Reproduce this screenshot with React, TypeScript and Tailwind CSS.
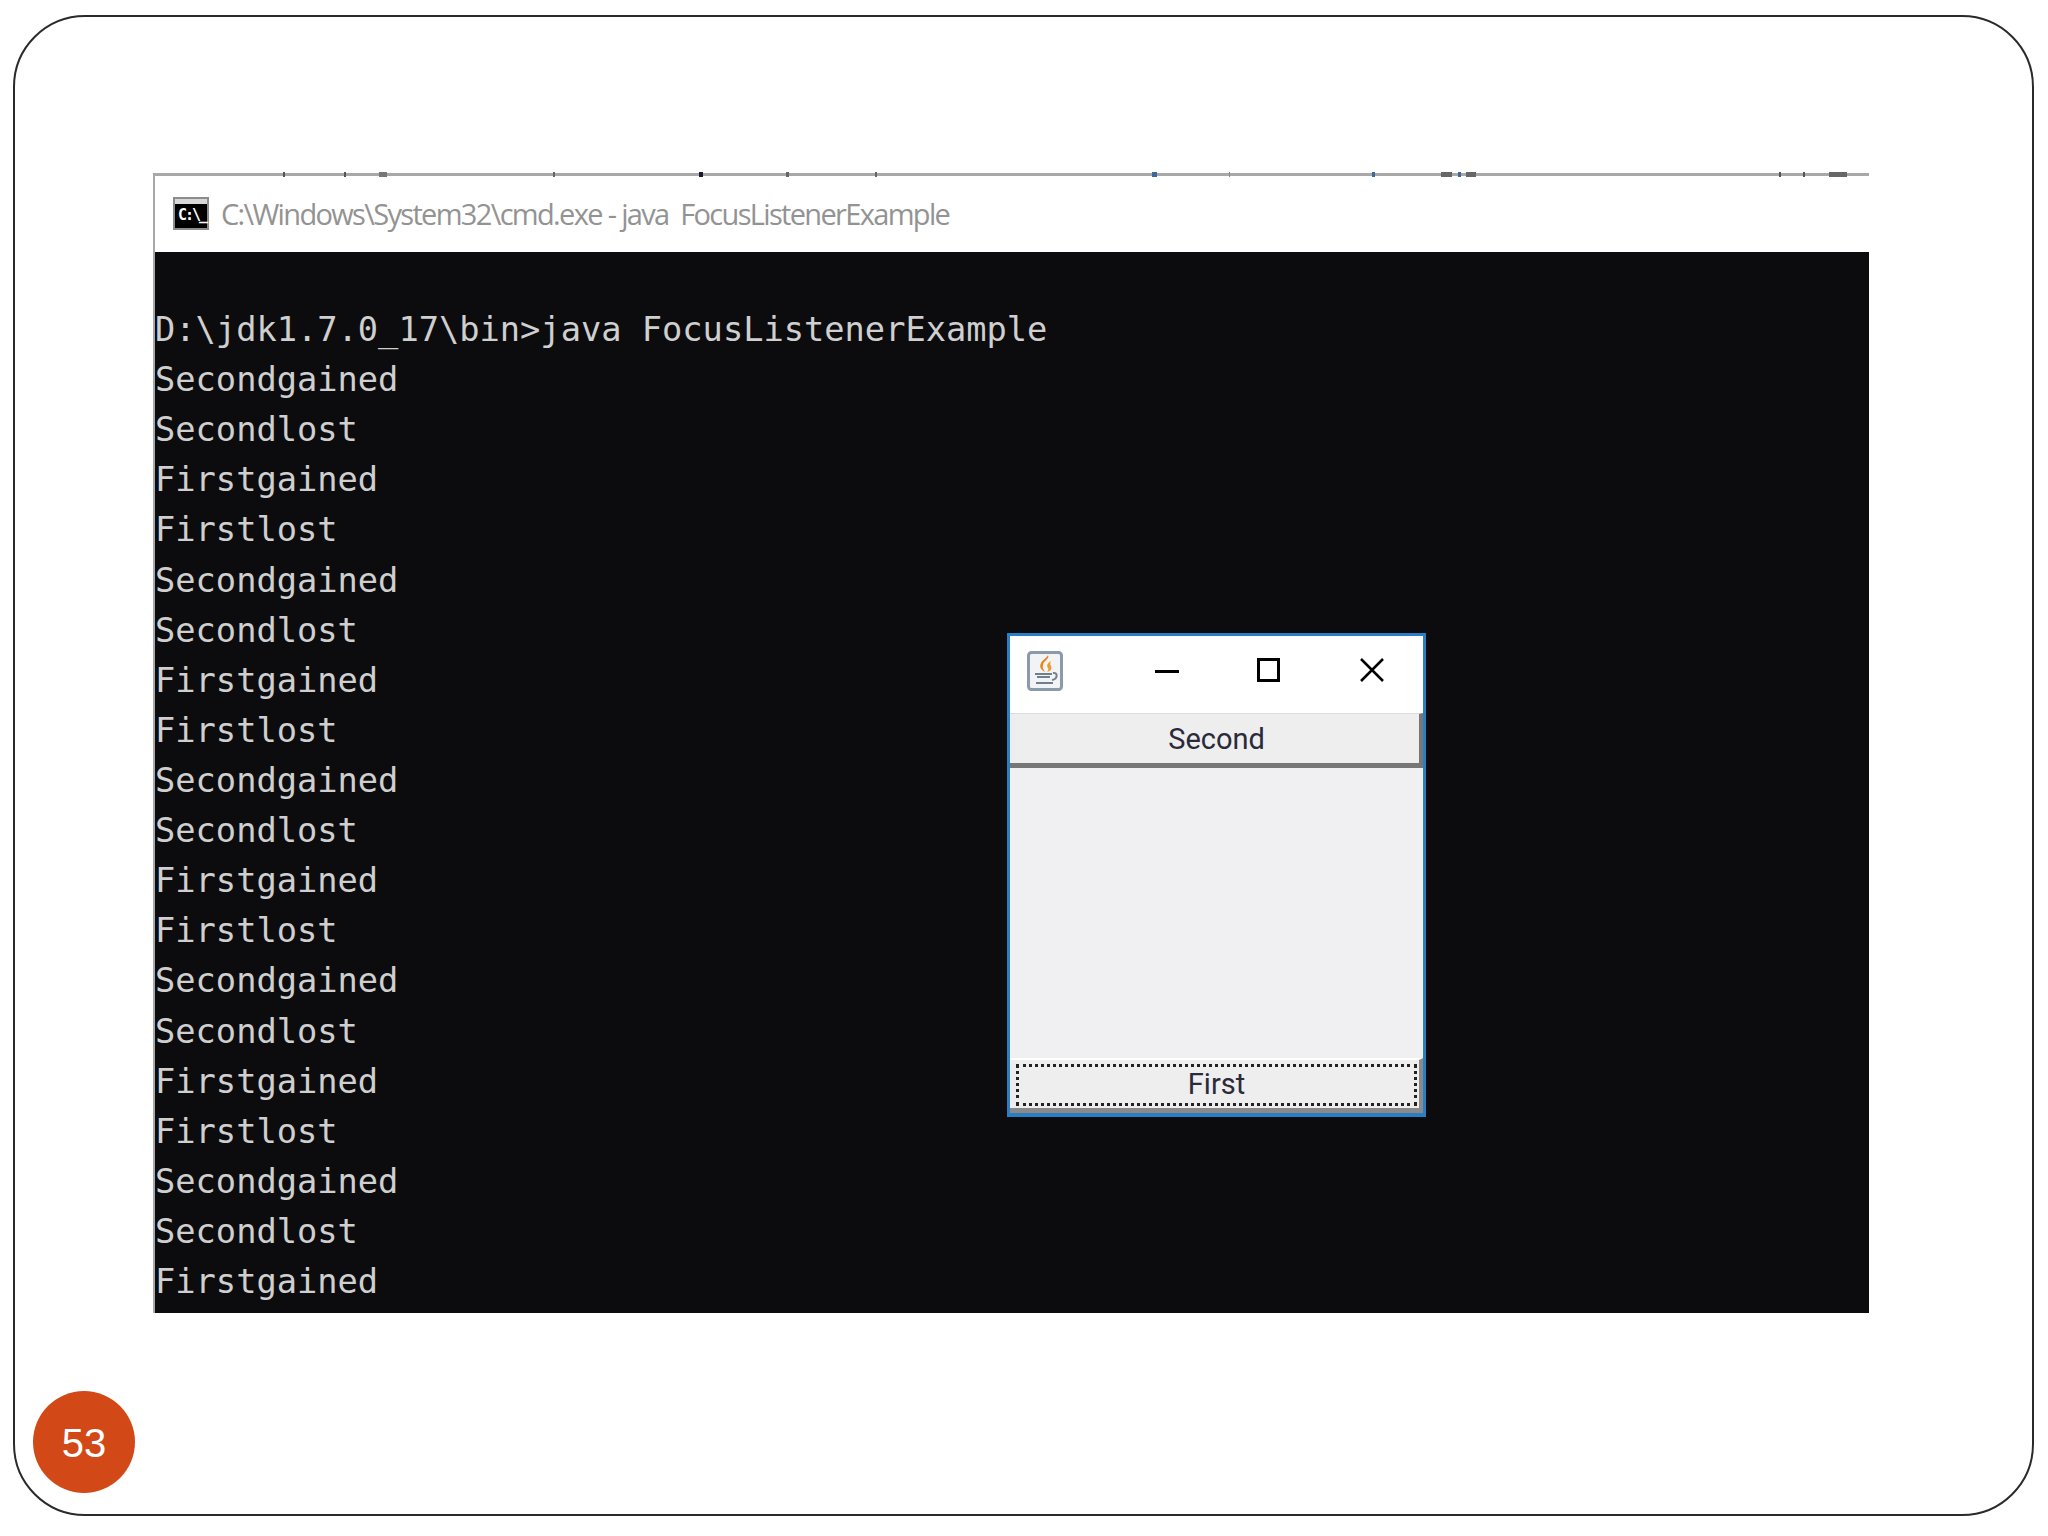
const lines = [
  "D:\\jdk1.7.0_17\\bin>java FocusListenerExample",
  "Secondgained","Secondlost","Firstgained","Firstlost",
  "Secondgained","Secondlost","Firstgained","Firstlost",
  "Secondgained","Secondlost","Firstgained","Firstlost",
  "Secondgained","Secondlost","Firstgained","Firstlost",
  "Secondgained","Secondlost","Firstgained",
];

const specks = [
  { x: 282, w: 2, c: "#555555" }, { x: 343, w: 2, c: "#555555" }, { x: 378, w: 8, c: "#777777" },
  { x: 552, w: 2, c: "#666666" }, { x: 698, w: 4, c: "#1a1a2a" }, { x: 785, w: 3, c: "#666666" },
  { x: 874, w: 2, c: "#666666" }, { x: 1151, w: 5, c: "#3a6a9a" }, { x: 1228, w: 1, c: "#888888" },
  { x: 1371, w: 3, c: "#3a6a9a" }, { x: 1440, w: 11, c: "#666666" }, { x: 1457, w: 3, c: "#3a6a9a" },
  { x: 1465, w: 10, c: "#666666" }, { x: 1778, w: 2, c: "#555555" }, { x: 1802, w: 2, c: "#555555" },
  { x: 1828, w: 18, c: "#666666" },
];

function CmdIcon() {
  return (
    <div className="w-[36px] h-[33px] border-2 border-[#8c8c8c] bg-black flex flex-col shrink-0">
      <div className="h-[5px] bg-[#d8d8d8]" />
      <div className="flex-1 flex items-center pl-[3px] text-white text-[15px] leading-none font-bold font-['DejaVu_Sans_Mono',monospace] tracking-[-2px]">C:\_</div>
    </div>
  );
}

function JavaIcon() {
  return (
    <svg width="36" height="40" viewBox="0 0 36 40" className="shrink-0">
      <rect x="1.5" y="1.5" width="33" height="37" rx="3" fill="#f1f3f5" stroke="#8a9aaa" strokeWidth="3" />
      <path d="M21 4c2 4-5 6-5 10-1 3 1 5 2 7-4-2-6-5-4-9 1-3 6-5 7-8z" fill="#e8861a" />
      <path d="M24 10c-3 2-5 4-3 7 1 1 0 3-1 4 4-1 5-3 4-6-1-1-1-3 0-5z" fill="#ef9a2c" />
      <path d="M8 23h17M10 26h13" stroke="#6e7f90" strokeWidth="2" />
      <path d="M26 22c5-1 5 6-1 7" stroke="#6e7f90" strokeWidth="2" fill="none" />
      <path d="M9 32h17" stroke="#6e7f90" strokeWidth="2" />
    </svg>
  );
}

export default function App() {
  return (
    <div className="w-[2048px] h-[1536px] bg-white pl-[13px] pr-[14px] pt-[15px] pb-[20px]">
      <div className="relative h-full rounded-[72px] border-2 border-[#2a2a2a] bg-white pl-[138px] pr-[163px] pt-[156px]">
        <div className="relative w-[1716px] h-[1140px] flex flex-col border-t-[3px] border-l-2 border-[#a8a8a8]">
          {specks.map((s, i) => (
            <div key={i} className="absolute top-[-4px] h-[5px]" style={{ left: s.x - 154, width: s.w, backgroundColor: s.c }} />
          ))}
          <div className="h-[76px] shrink-0 bg-white flex items-center pl-[18px] pb-[2px] gap-[12px]">
            <CmdIcon />
            <span className="text-[29px] leading-none text-[#939393] font-['Open_Sans',sans-serif] tracking-[-1.67px] whitespace-pre">{"C:\\Windows\\System32\\cmd.exe - java  FocusListenerExample"}</span>
          </div>
          <div className="flex-1 bg-[#0c0c0e] pt-[53px] overflow-hidden">
            {lines.map((l, i) => (
              <div key={i} className="h-[50.12px] leading-[50.12px] text-[33.7px] text-[#cfcfcf] whitespace-pre font-['DejaVu_Sans_Mono',monospace]">{l}</div>
            ))}
          </div>
          <div className="absolute left-[852px] top-[457px] w-[419px] h-[484px] border-[3px] border-[#2a7fc4] border-b-[4px] bg-[#f0f0f2] flex flex-col">
            <div className="h-[77px] bg-white flex items-center pl-[17px] pb-[8px] shrink-0 relative">
              <JavaIcon />
              <div className="absolute left-[145px] top-[34px] w-[24px] h-[3px] bg-black" />
              <div className="absolute left-[247px] top-[22px] w-[23px] h-[24px] border-[3px] border-black" />
              <svg className="absolute left-[350px] top-[22px]" width="24" height="24" viewBox="0 0 24 24">
                <path d="M1 1l22 22M23 1L1 23" stroke="#000" strokeWidth="2.5" />
              </svg>
            </div>
            <div className="h-[55px] shrink-0 bg-[#eeeeee] border-t border-[#dddddd] border-r-[4px] border-r-[#777777] border-b-[5px] border-b-[#777777] pl-[4px] pt-[3px] flex items-center justify-center text-[29px] text-[#2a2a3a] font-['Roboto',sans-serif]">Second</div>
            <div className="flex-1" />
            <div className="h-[55px] shrink-0 bg-[#eeeeee] border-t-2 border-white border-r-[4px] border-r-[#8a8a8a] border-b-[5px] border-b-[#8a8a8a] pl-[6px] pr-[2px] pt-[4px] pb-[2px] flex">
              <div className="flex-1 border-[3px] border-dotted border-[#222222] flex items-center justify-center text-[29px] text-[#2a2a3a] font-['Roboto',sans-serif]">First</div>
            </div>
          </div>
        </div>
        <div className="absolute left-[18px] top-[1374px] w-[102px] h-[102px] rounded-full bg-[#d34817] pt-[2px] flex items-center justify-center text-white text-[40px] font-['Liberation_Sans',sans-serif]">53</div>
      </div>
    </div>
  );
}
